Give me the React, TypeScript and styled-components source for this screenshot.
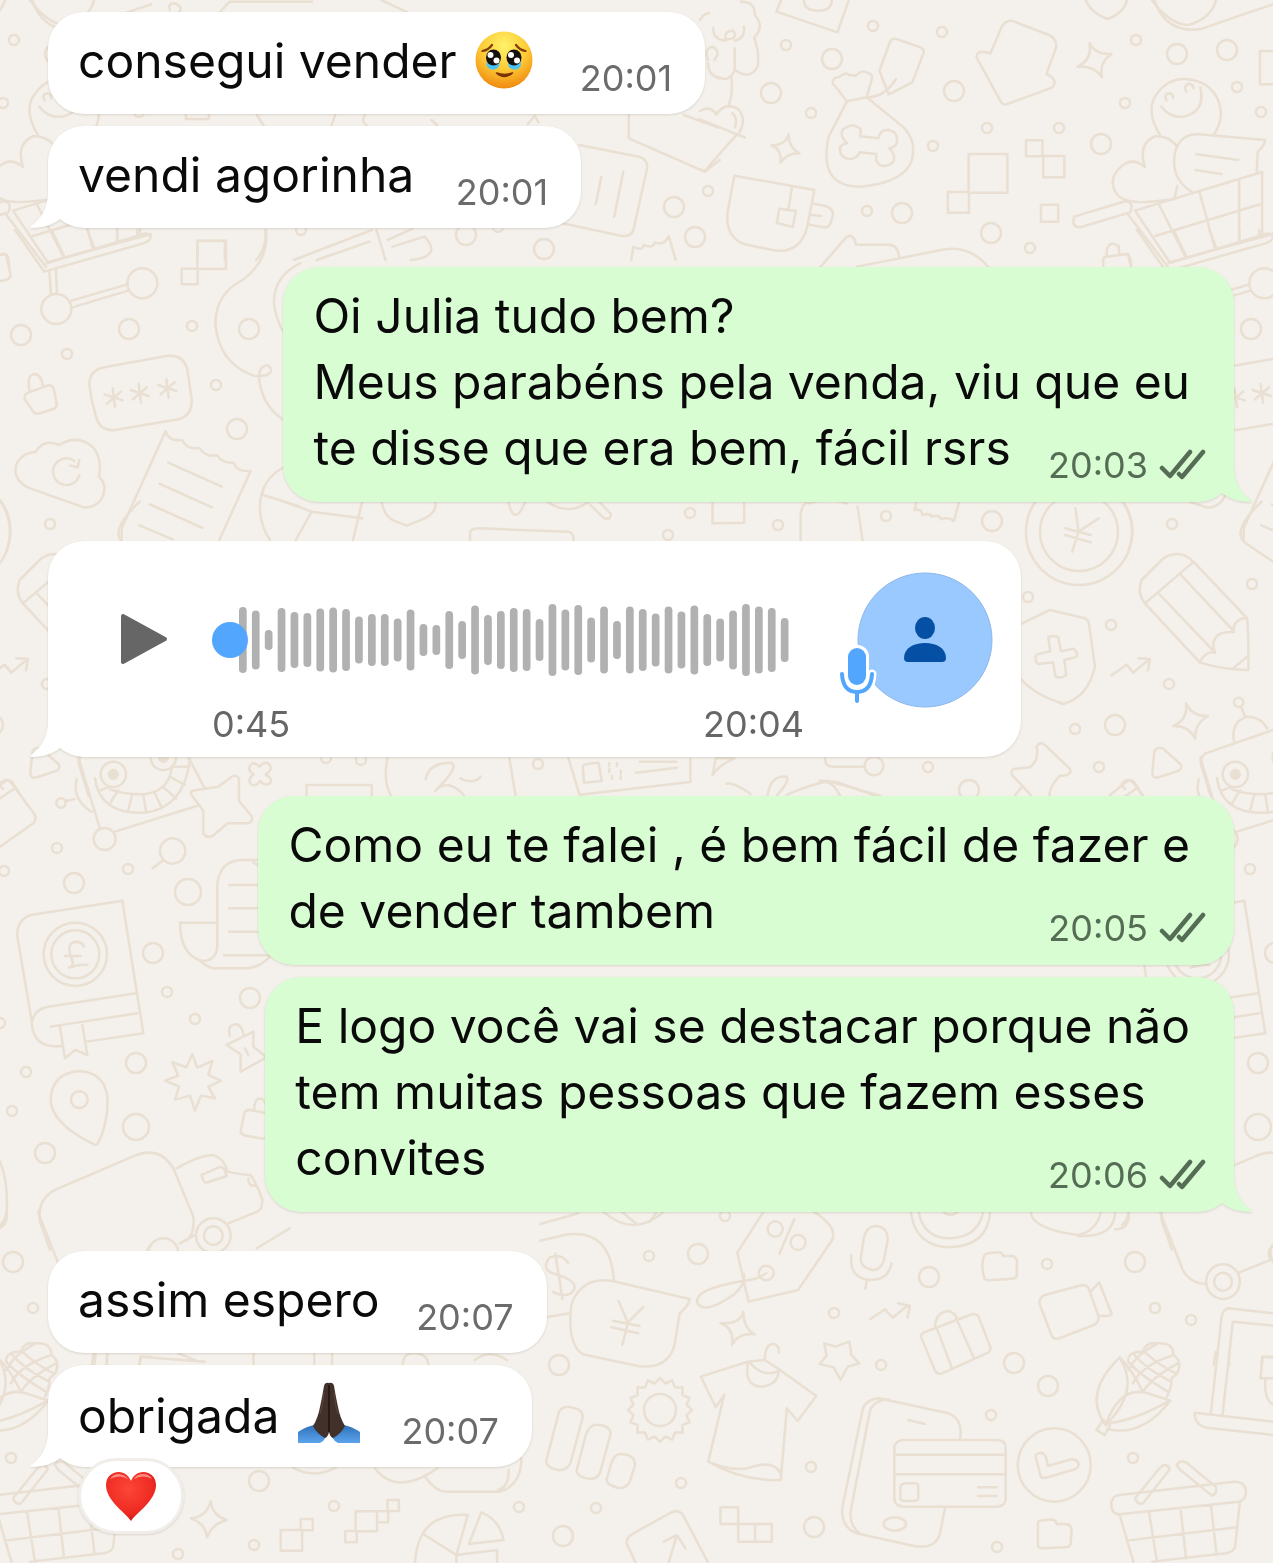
import React from 'react';
import styled, { createGlobalStyle, css } from 'styled-components';

type Side = 'in' | 'out';

const TILE_WIDTH = 1122;

const WAVE = [
  66, 59, 20, 64, 56, 54, 63, 65, 62, 47, 52, 52, 43, 61, 32, 30, 58, 38, 69, 50, 58, 64, 62, 42, 72, 61,
  70, 45, 67, 38, 67, 62, 53, 67, 57, 69, 52, 43, 59, 72, 67, 64, 44,
];

const DOTS_SMALL = [
  [786, 45], [873, 26], [942, 32], [811, 113], [933, 146], [987, 128], [1059, 128], [708, 191], [867, 211],
  [1030, 248], [1136, 40], [1125, 103], [1237, 87], [1261, 112], [67, 354], [192, 326], [216, 385],
  [301, 230], [498, 227], [690, 513], [668, 535], [778, 525], [886, 516], [1172, 524], [1252, 584],
  [1028, 597], [1111, 625], [1169, 684], [1075, 729], [1099, 767], [928, 767], [538, 764], [326, 758],
  [361, 760], [57, 848], [128, 869], [4, 871], [167, 992], [195, 1019], [26, 1072], [12, 1111], [0, 1023],
  [725, 1216], [649, 1256], [834, 1313], [881, 1365], [811, 1467], [681, 1483], [596, 1508], [1047, 1264],
  [1155, 1308], [1191, 1320], [991, 1415], [1133, 1458], [997, 1547], [334, 1506], [519, 1507],
  [254, 1545], [178, 1554],
];

const DOTS_MEDIUM = [
  [832, 59], [771, 93], [954, 91], [902, 213], [991, 233], [1101, 144], [1177, 54], [1227, 50], [21, 335],
  [129, 329], [249, 329], [237, 429], [466, 235], [544, 249], [674, 207], [695, 237], [992, 521],
  [1115, 725], [969, 790], [74, 883], [153, 953], [250, 998], [136, 1063], [45, 1153], [698, 1254],
  [929, 1277], [1135, 1262], [559, 1365], [1014, 1363], [1048, 1386], [563, 1536], [814, 1527], [259, 1481],
];

const DOTS_LARGE = [
  [188, 892], [136, 1127],
];

// wavy outline of the cog doodles
const cogPath = (cx: number, cy: number, r: number, teeth: number) => {
  const points = Array.from({ length: teeth * 2 }, (_, i) => {
    const a = (i * Math.PI) / teeth;
    const d = i % 2 ? r - 3 : r + 2;
    return `${(cx + Math.cos(a) * d).toFixed(1)} ${(cy + Math.sin(a) * d).toFixed(1)}`;
  });
  return `M${points.join('L')}Z`;
};

const Dots = ({ list, r }: { list: number[][]; r: number }) => (
  <>
    {list.map(([cx, cy]) => (
      <circle key={`${cx}_${cy}`} cx={cx} cy={cy} r={r} />
    ))}
  </>
);

const Doodles = () => (
  <Wallpaper viewBox="0 0 1273 1563" preserveAspectRatio="xMidYMin slice" aria-hidden="true">
    <defs>
      <g id="doodles">
        <Dots list={DOTS_SMALL} r={5} />
        <Dots list={DOTS_MEDIUM} r={10} />
        <Dots list={DOTS_LARGE} r={13} />
        <path d={cogPath(660, 1410, 30, 16)} />
        <circle cx="660" cy="1410" r="16" />
        <circle cx="1079" cy="532" r="53" />
        <circle cx="1079" cy="532" r="39" />

        {/* envelope, notes and receipts at the top left */}
        <g transform="scale(.459 .3333)">
          <path d="M65 0q40 75 80 75q50-20 60-75M370 30q-5-20 10-20q20 8 10 28M480 35l20-30h180M830 0l55 35M405 345v12h50v-12M560 345l15 33M730 345l-8 33M795 345q-10 20 5 33M940 360l12 15M1150 372l15-25l8 20" />
          <path d="M1370 345v70L1535 515L1568 480M1490 345l75 38M1262 435l130 35q20 10 18 35L1380 690q-5 20-25 18L1225 670M1310 530l-12 82M1358 515l-20 135" />
          <path d="M578 690q5 50-20 90M430 780v-57h60v57M640 780l170-90M690 780l115-55M820 690l20 90M845 720l55-35M855 740l70-30q40 60-30 70M1375 780l5-40q20 15 22-5q20 12 25-8q20 12 30-18l15 70" />
        </g>

        {/* gift bag, cup, mitten, cart */}
        <g transform="translate(700 0) scale(.3655 .3333)">
          <path d="M112 5q40 0 38 40q28 35-2 68q15 40 10 85q-20 45-62 12M0 60q10-20 25-20M36 85q0 35 35 37q-8-30 20-30q14 25-15 25M120 80q5 35-25 42M95 145v65q-15 40-48 20M86 232q5 45-7 85M22 180q-12-35 12-40q25 15 5 40M22 190q0 35 30 45" />
          <path d="M0 333q28-18 45 10q25-40 60-15q25 30 0 75M0 358l123 55M88 340q15 10 8 42M100 404L12 514L0 508M222 0L209 35L376 97L407 0M285 0q-2 32 40 32q35 0 36-32" />
          <path d="M516 283L491 213L520 125q5-12 18-8l67 26q10 6 6 18L581 247ZM456 292q50 0 80-55M402 304L363 250q-2-18 20-20q15-16 25-4q12-2 18 2q15-20 32-10q12 2 13 15L456 292ZM402 304L352 410q-30 150 86 150q150-15 145-115q0-30-25-62L456 292" />
          <path d="M438 409L488 415q5-28 28-25q28 5 22 40q-5 12-20 15q20 20 10 42q-30 25-46-5v-20l-46-5q-5 20-30 20q-28-8-22-38q5-5 18-10q-20-18-12-40q30-25 50 0Z" />
          <path d="M94 527L75 640q-5 70 45 92q60 15 90 20q65 5 83-70L313 570ZM252 560L242 628M217 626l45 7l-8 48l-44-12ZM306 610l38 8q20 8 20 25l-6 25q-8 18-20 14l-38-8M302 644l30 4" />
          <path d="M853 62q-20 0-28 20L795 160l-20-5q-20 0-18 18l65 130q5 12 16 10L965 262q15-25-17-40L975 140q0-25-20-35ZM1066 130q15 35 60 32q-35 25-26 70q-20-35-67-32q40-20 33-70ZM242 403q0 40 30 57q-35 0-52 28q5-40-25-52q40 0 47-33Z" />
          <path d="M735 462h106v116h-106ZM678 576h58v62h-58ZM892 421h45v48h-45ZM939 468h58v64h-58ZM933 614h47v51h-47ZM1568 153h-36v100h36M1055 0q15 40 60 57q45-17 53-57M1243 0q30 100 125 88q130-50 200-75" />
          <path d="M1258 405q-40-75-10-120q30-50 80-48q70 5 92 70q15 50-15 98M1262 320q25 35 62 30q60-15 45-88M1276 302q-8-22 10-22q10 4 8 14M1330 275q-8-22 10-24q10 4 10 14M1217 500q-20-70 30-92q35 0 60 32M1217 500q-35-30-65 0q-40 40-10 85q25 30 110 18l45-5q5-20 9-40" />
          <path d="M1345 575q-60-40-45-120q15-55 65-52L1546 420q0 15-20 35l-3 65M1358 463l115 17M1356 510l70 12M1190 632L1538 516V700M1190 632l95 155l283-85M1170 642l110 158M1024 650L1165 603q20 5 15 25q0 8-5 10L1040 682q-25 0-16-32ZM1255 612l73 158M1367 577l41 165M1475 540v180M1245 708l288-95" />
          <path d="M1103 800v-20q0-10 10-10l55-8q10 0 12 38M1113 768v-20q10-28 32-10l2 22M330 800L400 712q20-15 27 22h90q25 0 28 40M430 800L670 748q70-10 118 52" />
        </g>

        {/* cart wheels, password card, cloud, receipt */}
        <g transform="translate(0 230) scale(.3333)">
          <path d="M45 0L133 125L430 40q25-8 22-22q-8-12-25-5L140 100M155 0l37 78M262 0l20 52M352 0v35M412 0v15M148 125l5 68M168 120l3 70M215 212L382 163M217 232L385 182M592 32h86v85h-86ZM545 116h48v47h-48Z" />
          <circle cx="169" cy="237" r="45" />
          <circle cx="427" cy="160" r="45" />
          <path d="M798 0q10 90-70 150q-80 40-82 130q10 120 115 157q50 5 53-17q-5-20-25-10q-15 10-10 50q15 80 85 118M900 100q-80 40-78 120q10 70 42 102M75 510q-5-20 15-24l55-20q12-2 16 10l9 45q2 12-10 16l-45 14q-12 2-16-8ZM88 480q-8-45 15-48q20 0 26 35" />
          <path d="M275 510L268 465q0-45 45-53L500 378q50-5 62 40l13 90q2 50-40 60L345 600q-45 4-57-40ZM338 475l7 56M314 493l54 18M363 485l-42 36M416 462l7 56M392 480l54 18M441 472l-42 36M499 447l7 56M475 465l54 18M524 457l-42 36" />
          <path d="M82 772q-50-30-30-75q20-30 55-32q25-40 70-20q60-35 105 10q25 35 15 85q30 30 5 70q-20 25-50 22ZM238 735a40 40 0 1 1-15-42M238 690l-5 22l-22-5" />
          <path d="M365 930v-35L497 603q5 30 50 28q15 30 50 22q20 30 55 23q15 25 50 22q5 28 50 25L658 930M505 698l160 72M478 761l158 71M450 823l157 71M418 886l100 42M865 705q-90 40-85 140q5 50 30 85M790 795l110 35M0 810q50 70 20 150M0 75q20-10 22 15l10 45q0 15-32 18" />
        </g>

        {/* strips above and below the voice message */}
        <g transform="translate(280 480) scale(.6333 .3333)">
          <path d="M160 62q5 50 20 60l20 15l20-15q30-20 25-60M420 62q35 50 70 0M490 75l22 40q12 5 10-15l-20-38M360 62q10 85 28 0M300 182v-22q0-15 15-15L455 155q10 5 8 28M683 70v60l50-2V65M822 182V110q0-30 10-45M920 182L912 80M835 70q30-20 60 0M1005 65l-3 25q12-5 12 15q12-8 15 5q12-8 15 8q12-8 20 5l8-55" />
          <path d="M1256 85l5 70l32-40M1261 155l-10 60M1240 145l40 20M1240 165l40 22M1550 65q-50 90-25 125l43 55M0 60l50 35l80 20M50 95L25 180M130 62l-15 120" />
          <path d="M170 832q-8 70 5 115M362 832l10 115M230 898q5-50 40-50q15 10-25 85q20-40 45 12M285 895q20 20 32-5M42 947v-32h103v32M455 832l18 112l175-38v-70M478 860q0-10 25-12l5 55l-28 5ZM562 878l65-15M568 845h58M683 885l5-50h30q-25 20-35 50M705 912q10-8 38 30M770 945q5-60 30-55q5 15-15 55M800 945q60-50 80-38l60 40" />
          <path d="M520 850v8M532 850v8M520 868v8M538 872v8M524 888v8M538 888v8" />
        </g>

        {/* pencil, shield, pin */}
        <g transform="translate(820 550) scale(.3333)">
          <path d="M975 160q-25-30-10-70L1030 25q50-30 90 10L1282 205q5 90 3 155q-70 0-145-22ZM975 160L1118 38M1018 132L1185 308M1080 72L1243 245M1140 335q20-35 45-27q-5-20-5-20q0-45 60-42q0-40 40-42M1240 355l45-38" />
          <path d="M603 222L690 180l105 25q10 5 12 15l18 130q-20 90-95 112q-90-30-127-75M685 262q12-8 30 0l8 42l38-8q12 10 10 24l-38 10l6 45q-15 12-32 5l-8-43l-45 5q-12-12-5-28l42-10ZM875 376l45-32l20 24l48-40M955 325l35 2l-6 34M1098 460q20 40 66 38q-42 25-38 68q-20-40-66-38q45-20 38-68Z" />
          <path d="M1003 605q10-18 28-8l50 45q8 12-4 20l-60 20q-20 5-20-12ZM650 590q10-18 25-5l75 72q8 20-30 20q-30 30-32 60M650 590q8 40-20 62l-50 5q-12 10 0 22l52 56M585 737l20-25M870 735L920 695q12-8 22 0l25 40M905 705l10 12" />
          <path d="M1172 737L1142 640q0-20 15-30L1359 540M1242 575q-10-60 40-75q40 0 60 35M1275 500l-12-30M15 622q0 28 22 28h98M0 692q40 0 60 45M20 692l160 45" />
          <circle cx="1256" cy="457" r="14" />
          <circle cx="162" cy="648" r="28" />
        </g>

        {/* robot, book, map pin, truck */}
        <g transform="translate(0 750) scale(.3333)">
          <path d="M235 22L300 237M345 245L590 168M565 22l48 90M230 88q-15 60 45 98M222 148l-25 5M285 85q15 110 150 103q120-15 135-165M330 118q40 15 95 15q80-5 90-78M300 122l28-12M330 160l25-40M385 180l12-48M438 185l-8-52M485 172l-22-45M528 145l-40-35M555 105l-45-25M568 50h-45" />
          <circle cx="314" cy="267" r="33" />
          <circle cx="340" cy="73" r="38" />
          <circle cx="490" cy="22" r="38" />
          <circle cx="183" cy="159" r="14" />
          <circle cx="340" cy="73" r="13" fill="#e9dfd2" />
          <circle cx="490" cy="22" r="13" fill="#e9dfd2" />
          <path d="M0 100q20-20 35 0L105 195q5 15-5 25L0 290M0 145l45-30M575 135q-8-12 10-14L655 110l40-30q18-8 22 8v65l38 45q5 15-10 22h-62l-45 38q-20 8-28-8v-68Z" />
          <path d="M752 45q10-12 27 5q15-20 30-5q10 15-12 28q25 15 12 28q-15 8-28-8q-15 20-30 8q-8-15 10-28q-20-12-9-28ZM490 330l-32 25M540 518h110M540 518q0 95 65 115q45 0 47-45V400q10-70 75-70h65M760 338q25 10 32 32M688 405h102M688 475h102M688 545h102M672 616h138M600 633q30 25 50 22h80q60 0 90-50" />
          <circle cx="518" cy="303" r="38" />
          <path d="M95 812L52 560q-3-50 40-65L367 452L430 850L260 875M185 888q-85 10-90-70q8-42 50-48L408 730M152 830L412 790M180 832l15 93l30-25l37 15l-15-90M252 590q-10-20-35-12q-15 10-5 40q15 30-5 35q30-10 55-8M195 618h48" />
          <circle cx="226" cy="613" r="95" />
          <circle cx="226" cy="613" r="72" />
          <path d="M285 1185Q150 1120 152 1045q5-75 85-82q80 5 86 85q0 80-30 133q-3 5-8 4ZM577 913l15 40l45-20l-12 42l38 17l-38 18l20 35l-42-8l-18 45l-15-45l-45 12l12-40l-42-17l40-15l-18-40l42 15Z" />
          <circle cx="238" cy="1049" r="25" />
          <path d="M680 885L760 845v45l40 32L722 965v-52ZM690 858q-10-35 20-35q15 5 20 28M735 895l10 20M733 1090q5-12 18-10l50 10q8 5 6 15l-8 55q-5 8-15 6l-52-10q-10-5-10-12ZM763 1082q-2-38 20-36q18 5 15 40" />
          <path d="M150 1500L120 1415q-10-65 45-95L410 1215q70-25 110 40L580 1400q5 50-20 72M530 1255q70-40 110-40q35 12 42 50q50 10 70 10q25 40 35 75q0 30-15 35L685 1420M605 1275l50-22q12-5 18 5l8 20l-55 18q-12 5-16-5ZM745 1285q0 25 20 22M540 1480l45-25M770 1495l100-60M0 1235q25 60 20 150q-5 30-20 40" />
          <circle cx="640" cy="1457" r="52" />
          <circle cx="640" cy="1457" r="28" />
          <circle cx="490" cy="1510" r="45" />
        </g>

        {/* shirt, phone, corn, basket */}
        <g transform="translate(540 1190) scale(.4675 .3333)">
          <path d="M0 152L60 133q90-15 98 136M0 385L64 370M0 102L82 70M60 218q-15-30-40-15q-20 40 15 50q45 20 38 45q-10 30-45 8M33 192l15 135M320 327L155 273q-65-15-88 70q-10 120 25 150l120 36q60 8 75-60l12-100q18-20 21-40ZM168 333l20 65l33-47M188 398l-12 67M156 392l57 16M153 412l57 18" />
          <path d="M135 65q65 80 130 0M175 65l30 35M250 65l-15 30M478 65L422 188l24 147L552 300L625 150q12-40-40-85M544 88l-32 103M484 250q-20 20-48 22q-105 25-100 65q15 40 80-25q25-30 20-60M435 365q0 50 24 68q-35-5-48 32q5-50-25-66q42 5 49-34Z" />
          <ellipse cx="503" cy="117" rx="16" ry="23" />
          <ellipse cx="552" cy="157" rx="16" ry="23" />
          <ellipse cx="484" cy="249" rx="16" ry="22" />
          <path d="M692 150q5-42 27-42q28 5 24 48l-8 58q-8 28-25 26q-25-8-24-35ZM666 195q-5 70 40 75q40 0 46-50M699 270l-3 26M793 65q10 107 85 107q80-5 85-107M810 65q10 80 68 80q60-5 70-80M862 65q15 20 32 0M950 198q2-10 20-10q20-5 20 10h20q12 5 10 20v40q-2 8-10 8l-50 5q-10 0-10-10q-8-40 0-63ZM706 388l32-30l16 25l34-38M766 340l25 8l-5 35" />
          <path d="M815 440q0-10 10-15l95-50q12-8 18 5l25 90q2 15-8 20L860 550q-10 5-15-8ZM845 415q0-50 30-52q15 10 18 25M848 412l33 122M890 385l38 118M1068 340q0-18 12-25l80-30q12 0 15 15l20 80q0 18-10 25l-75 40q-12 5-16-10ZM1178 305l18-28l27 95q-5 8-25 5M1326 65L1375 240q15 40 50 42M1495 248l70-40M1568 165q-15 20-5 45M1050 65q0 50 100 70q40-10 50-70M1150 138q80 5 80-73M1230 118q30 0 30-50" />
          <ellipse cx="1461" cy="275" rx="36" ry="52" />
          <ellipse cx="1461" cy="275" rx="19" ry="27" />
          <path d="M445 515L344 560l32 92l18-38L360 815q75 60 155 55L528 655l23 38l40-75L511 538L481 510ZM445 515q-10 75 30 75q35-5 36-52M450 520q30 45 62 22M481 510q0-50 20-48q12 8 10 25M360 815q60 35 95 15q45-20 60 20M608 460l24 10l30-15l4 40l17 25l-25 10l-15 40l-15-38l-30-10l15-25Z" />
          <path d="M60 650l18 6q15 8 13 28L65 820q-8 22-25 20q-25-5-27-25L40 668q5-18 20-18ZM120 704q30 0 31 28L128 850q-8 20-25 16q-22-5-25-22l20-110q8-30 22-30ZM170 792q35 0 33 35l-10 45q-8 25-25 22q-25-8-26-25l12-55q6-20 16-22Z" />
          <path d="M867 950L855 1033q-10 45-55 35L677 1030q-35-20-30-80L690 660q5-30 35-35L874 670q30 15 25 75M745 628q-35 5-40 40L665 960q-5 45 20 72M788 690l35 12M758 770q2-18 20-20h200q18 2 18 20v160q-2 18-18 20H778q-18-2-20-20ZM758 794h238M758 853h238M937 892h40M937 918h40M783 880h18q8 0 8 10v35q-2 8-10 8h-18q-10 0-10-10v-32q2-10 12-11Z" />
          <ellipse cx="759" cy="1002" rx="24" ry="20" />
          <ellipse cx="1100" cy="825" rx="78" ry="110" />
          <path d="M1060 800q0-10 12-12q12 2 14 40l50-20q15 0 16 15q0 12-10 16L1080 864q-8 2-10-10ZM1210 705Q1160 610 1240 502q45 100-30 203M1210 705q30-120 90-95l48 22q-60 110-135 85M1240 502q28 40 50 105M1215 700q60-10 132-68M1205 690l15 15l-12 30l-18-15Z" />
          <path d="M1258 512q0-28 32-27q5-30 32-25q32-5 33 35q20 20 8 55l-12 15q0 30-10 55M1258 515q25 40 85 90M1268 490q30 50 82 85M1292 484q30 40 68 66M1268 580q20-55 87-85M1290 605q20-45 75-85M1258 540q20-50 62-78" />
          <path d="M1435 670L1458 380q3-22 15-25L1568 370M1460 675L1482 395L1568 407M1400 668L1568 695M1400 668q0 35 25 45L1568 735M1568 500h-22l-5 65h27M1552 565q-5 60 16 80M386 952h38v50h-38ZM424 1002h72v53h-72ZM460 1002v53M205 1119l-20-59q0-20 15-30L280 968q15-10 25 5L360 1119M293 1035l-18 84M265 1055l28-20l18 40" />
          <path d="M1225 930q0-12 15-15L1485 875q25 0 25 30q0 25-15 30L1240 973q-20 0-18-40ZM1273 925L1325 835q12-20 22 0q0 5-5 12L1290 940q-12 5-17-15ZM1362 825q5-15 20-8L1445 890q5 20-8 27L1370 840ZM1240 975l30 144M1497 935l-10 135q-2 15-20 20L1310 1115M1303 968l17 150M1370 955l12 150M1435 945l12 145M1255 1052L1490 1012M1065 998q2-8 15-8q25-5 25 12h20q12 2 12 20l-2 40q-2 10-12 10l-48 3q-10 0-10-12Z" />
        </g>

        {/* sparkle, squares and pie chart at the bottom */}
        <g transform="translate(0 1340) scale(.3571 .3333)">
          <path d="M590 483q5 45 45 57q-40 10-55 52q-5-42-45-57q45-5 55-52ZM786 570h60v62h-60ZM842 537h34v34h-34ZM996 514h60v60h-60ZM967 573h32v34h-32ZM1056 514h31v33h-31ZM1085 480h32v33h-32ZM1310 525q-140-10-148 144M1310 525L1278 645L1185 582M1278 645L1392 630v38M1278 645v24M1348 517L1313 612L1410 600q-10-60-62-83Z" />
          <path d="M262 37l-5 38M300 37v38M390 75l3-25l180 15M500 40l50 22M710 37v38M880 37v38M930 37v38M1128 75q0-37 35-37q35 5 37 37M1330 60q40-35 90 0M820 383q60 35 120 0M1050 385q60 85 175 0M1190 410q30 45 60 45h150q60-20 60-100M1395 450q30-10 30-60" />
        </g>
      </g>
    </defs>
    <use href="#doodles" />
    <use href="#doodles" x={-TILE_WIDTH} />
    <use href="#doodles" x={TILE_WIDTH} />
  </Wallpaper>
);

const TearyFace = () => (
  <Emoji viewBox="0 0 60 60" role="img" aria-label="🥹">
    <defs>
      <radialGradient id="face" cx="50%" cy="25%" r="75%">
        <stop offset="0" stopColor="#fff36a" />
        <stop offset=".55" stopColor="#fdca36" />
        <stop offset="1" stopColor="#f0890f" />
      </radialGradient>
    </defs>
    <circle cx="30" cy="30" r="28.500" fill="url(#face)" />
    <ellipse cx="19" cy="34" rx="6.500" ry="5.500" fill="#4bc4f5" />
    <ellipse cx="40.500" cy="34" rx="6.500" ry="5.500" fill="#4bc4f5" />
    <ellipse cx="19.500" cy="27.500" rx="7.500" ry="8" fill="#15100c" />
    <ellipse cx="40" cy="27.500" rx="7.500" ry="8" fill="#15100c" />
    <circle cx="16.500" cy="25" r="3" fill="#fff" />
    <circle cx="22.500" cy="30.500" r="3" fill="#fff" />
    <circle cx="37" cy="25" r="3" fill="#fff" />
    <circle cx="43" cy="30.500" r="3" fill="#fff" />
    <path d="M8.500 21q6-1 9.500-6M51.500 21q-6-1-9.500-6" fill="none" stroke="#834008" strokeWidth="2.200" strokeLinecap="round" />
    <path d="M22.500 43q7.500 7 16 0q-8 3-16 0Z" fill="#7a3306" stroke="#7a3306" strokeWidth="1.600" strokeLinejoin="round" />
  </Emoji>
);

const PrayingHands = () => (
  <Emoji viewBox="0 0 64 64" role="img" aria-label="🙏🏿" $wide>
    <defs>
      <linearGradient id="sleeve" x1="0" y1="0" x2="0" y2="1">
        <stop offset="0" stopColor="#2f70b8" />
        <stop offset="1" stopColor="#5ba4ee" />
      </linearGradient>
    </defs>
    <path d="M1 51Q8 46 17 44L29 56Q27 60 23 62H1ZM63 51Q56 46 47 44L35 56Q37 60 41 62H63Z" fill="url(#sleeve)" />
    <path d="M32 2q-4-1-5 3q-2 12-4 21q-2 11-7 19q4 8 12 12q3-1 4-6q1 5 4 6q8-4 12-12q-5-8-7-19q-2-9-4-21q-1-4-5-3Z" fill="#42312b" />
    <path d="M32 4v47" stroke="#1e1310" strokeWidth="1.500" />
    <path d="M27 11q-1 14-4 22M37 11q1 14 4 22" stroke="#5b463d" strokeWidth="1" fill="none" />
  </Emoji>
);

const RedHeart = () => (
  <svg width="52" height="52" viewBox="0 0 52 52" role="img" aria-label="❤️">
    <defs>
      <radialGradient id="heart" cx="45%" cy="35%" r="70%">
        <stop offset="0" stopColor="#fc4636" />
        <stop offset=".7" stopColor="#ee2a22" />
        <stop offset="1" stopColor="#c3130f" />
      </radialGradient>
    </defs>
    <path d="M26 51C21 43 1 31 1 15C1 7 7 2 13.500 2C20 2 24 6 26 11C28 6 32 2 38.500 2C45 2 51 7 51 15C51 31 31 43 26 51Z" fill="url(#heart)" />
    <path d="M5 9q3-5 9-5q6 1 9 5q-8-5-18 0ZM29 9q3-5 9-5q6 0 9 5q-9-5-18 0Z" fill="#ffb4a8" opacity=".7" />
  </svg>
);

const Ticks = () => (
  <TickIcon viewBox="0 0 48 34" role="img" aria-label="Entregue">
    <path d="M4 20L12 28L32 4M21 26L24 29L45 4" fill="none" stroke="currentColor" strokeWidth="4.500" strokeLinecap="round" strokeLinejoin="round" />
  </TickIcon>
);

const BubbleTail = ({ side }: { side: Side }) => (
  <TailShape viewBox="0 0 58 37" $side={side} aria-hidden="true">
    <path d="M18 0C18 16 11 27 1 34Q-1 36 2 36C14 36 24 32 30 27L54 36V0Z" fill="currentColor" />
  </TailShape>
);

interface BubbleProps {
  side: Side;
  lines: React.ReactNode[];
  time: string;
  tail?: boolean;
  reaction?: React.ReactNode;
}

const TextMessage = ({ side, lines, time, tail, reaction }: BubbleProps) => (
  <Bubble $side={side}>
    {tail && <BubbleTail side={side} />}
    <TextLayout $side={side}>
      <MessageText $side={side}>
        {lines.map((line, i) => (
          <Line key={i}>
            {line}
            {i === lines.length - 1 && <MetaSpace $side={side} />}
          </Line>
        ))}
      </MessageText>
      <Meta $side={side}>
        <time>{time}</time>
        {side === 'out' && <Ticks />}
      </Meta>
    </TextLayout>
    {reaction}
  </Bubble>
);

const VoiceMessage = () => (
  <Bubble $side="in">
    <BubbleTail side="in" />
    <VoiceLayout>
      <PlayButton type="button" aria-label="Reproduzir">
        <svg width="48" height="52" viewBox="0 0 48 52">
          <path d="M3 3L45 26L3 49Z" fill="#666" stroke="#666" strokeWidth="4" strokeLinejoin="round" />
        </svg>
      </PlayButton>
      <Player>
        <WaveBox>
          <Wave viewBox="0 0 550 76" aria-hidden="true">
            {WAVE.map((h, i) => (
              <rect key={i} x={i * 12.9} y={38 - h / 2} width="7.7" height={h} rx="3.8" fill="#b1b1b1" />
            ))}
          </Wave>
          <Seek type="range" min="0" max="45" defaultValue="0" aria-label="Posição do áudio" />
        </WaveBox>
        <Times>
          <span>0:45</span>
          <time>20:04</time>
        </Times>
      </Player>
      <Avatar viewBox="0 0 156 136" role="img" aria-label="Foto do contato">
        <circle cx="88" cy="68" r="67" fill="#99c9fe" stroke="#8bb8ea" strokeWidth="1" />
        <ellipse cx="88" cy="56" rx="10" ry="11" fill="#0550a4" />
        <path d="M67 86C67 76 77 71 88 71S109 76 109 86Q109 90 105 90H71Q67 90 67 86Z" fill="#0550a4" />
        <g fill="none" stroke="#fff" strokeWidth="9" strokeLinecap="round">
          <path d="M5 102q1 18 15 18q14 0 15-18M20 120v9" />
          <rect x="11" y="76" width="18" height="37" rx="9" strokeWidth="6" />
        </g>
        <path d="M5 102q1 18 15 18q14 0 15-18M20 120v9" fill="none" stroke="#53a6fd" strokeWidth="4" strokeLinecap="round" />
        <rect x="11" y="76" width="18" height="37" rx="9" fill="#53a6fd" stroke="#fff" strokeWidth="6" paintOrder="stroke" />
      </Avatar>
    </VoiceLayout>
  </Bubble>
);

const App = () => (
  <>
    <GlobalStyle />
    <Page>
      <Doodles />
      <Thread>
        <Group>
          <TextMessage side="in" lines={[<>consegui vender <TearyFace /></>]} time="20:01" />
          <TextMessage side="in" lines={['vendi agorinha']} time="20:01" tail />
        </Group>
        <Group>
          <TextMessage
            side="out"
            lines={['Oi Julia tudo bem?', 'Meus parabéns pela venda, viu que eu', 'te disse que era bem, fácil rsrs']}
            time="20:03"
            tail
          />
        </Group>
        <Group>
          <VoiceMessage />
        </Group>
        <Group>
          <TextMessage side="out" lines={['Como eu te falei , é bem fácil de fazer e', 'de vender tambem']} time="20:05" />
          <TextMessage
            side="out"
            lines={['E logo você vai se destacar porque não', 'tem muitas pessoas que fazem esses', 'convites']}
            time="20:06"
            tail
          />
        </Group>
        <Group>
          <TextMessage side="in" lines={['assim espero']} time="20:07" />
          <TextMessage
            side="in"
            lines={[<>obrigada <PrayingHands /></>]}
            time="20:07"
            tail
            reaction={
              <Reaction type="button">
                <RedHeart />
              </Reaction>
            }
          />
        </Group>
      </Thread>
    </Page>
  </>
);

export default App;

const GlobalStyle = createGlobalStyle`
  * {
    box-sizing: border-box;
  }
  body {
    margin: 0;
    background: #f4f0eb;
    font-family: Inter, 'Liberation Sans', sans-serif;
  }
`;

const Page = styled.main`
  position: relative;
  min-height: 100vh;
  overflow: hidden;
`;

const Wallpaper = styled.svg`
  position: absolute;
  inset: 0;
  width: 100%;
  height: 100%;
  fill: none;
  stroke: #e9dfd2;
  stroke-width: 2.5px;
  stroke-linejoin: round;
  stroke-linecap: round;
  path,
  circle,
  ellipse {
    vector-effect: non-scaling-stroke;
  }
`;

const Thread = styled.div`
  position: relative;
  display: flex;
  flex-direction: column;
  gap: 39px;
  padding: 12px 39px 96px 48px;
`;

const Group = styled.section`
  display: flex;
  flex-direction: column;
  gap: 12px;
`;

const Bubble = styled.article<{ $side: Side }>`
  position: relative;
  max-width: 100%;
  border-radius: 36px;
  filter: drop-shadow(0 1px 1px rgba(60, 50, 30, 0.14));
  ${({ $side }) =>
    $side === 'in'
      ? css`
          align-self: flex-start;
          background: #fff;
        `
      : css`
          align-self: flex-end;
          background: #d8fdd2;
        `}
`;

const TailShape = styled.svg<{ $side: Side }>`
  position: absolute;
  bottom: -1px;
  width: 58px;
  height: 37px;
  ${({ $side }) =>
    $side === 'in'
      ? css`
          left: -18px;
          color: #fff;
        `
      : css`
          right: -18px;
          color: #d8fdd2;
          transform: scaleX(-1);
        `}
`;

const TextLayout = styled.div<{ $side: Side }>`
  position: relative;
  display: grid;
  padding: ${({ $side }) => ($side === 'in' ? '16px 33px 18px 30px' : '16px 28px 19px 30px')};
  > * {
    grid-area: 1 / 1;
  }
`;

const MessageText = styled.p<{ $side: Side }>`
  margin: 0;
  padding: ${({ $side }) => ($side === 'in' ? '0 0 2px' : '0 16px 2px 0')};
  color: #0a0a0a;
  font-size: 48px;
  line-height: 66px;
`;

const Line = styled.span`
  display: block;
  height: 66px;
  white-space: nowrap;
`;

const MetaSpace = styled.span<{ $side: Side }>`
  display: inline-block;
  width: ${({ $side }) => ($side === 'in' ? '134px' : '172px')};
`;

const Meta = styled.div<{ $side: Side }>`
  align-self: end;
  justify-self: end;
  display: flex;
  align-items: center;
  gap: 10px;
  height: 36px;
  color: ${({ $side }) => ($side === 'in' ? '#6b6b6b' : '#566d55')};
  font-size: 36px;
  line-height: 36px;
`;

const TickIcon = styled.svg`
  width: 48px;
  height: 34px;
`;

const Emoji = styled.svg<{ $wide?: boolean }>`
  width: ${({ $wide }) => ($wide ? '64px' : '60px')};
  height: ${({ $wide }) => ($wide ? '64px' : '60px')};
  margin: 0 4px;
  vertical-align: -12px;
`;

const VoiceLayout = styled.div`
  position: relative;
  display: flex;
  align-items: flex-start;
  padding: 31px 28px 15px 72px;
`;

const PlayButton = styled.button`
  margin-top: 41px;
  padding: 0;
  border: 0;
  background: none;
  line-height: 0;
  cursor: pointer;
`;

const Player = styled.div`
  width: 592px;
  margin: 30px 33px 0 44px;
`;

const WaveBox = styled.div`
  display: grid;
  align-items: center;
  width: 577px;
  height: 76px;
  > * {
    grid-area: 1 / 1;
  }
`;

const Wave = styled.svg`
  width: 550px;
  height: 76px;
  margin-left: 27px;
`;

const Seek = styled.input`
  width: 100%;
  height: 36px;
  margin: 0;
  appearance: none;
  background: transparent;
  cursor: pointer;
  &::-webkit-slider-thumb {
    appearance: none;
    width: 36px;
    height: 36px;
    border-radius: 50%;
    background: #53a6fd;
  }
`;

const Times = styled.div`
  display: flex;
  justify-content: space-between;
  margin-top: 28px;
  color: #666;
  font-size: 36px;
  line-height: 36px;
`;

const Avatar = styled.svg`
  width: 156px;
  height: 136px;
`;

const Reaction = styled.button`
  position: absolute;
  bottom: -67px;
  left: 30px;
  display: flex;
  align-items: center;
  justify-content: center;
  width: 106px;
  height: 76px;
  padding: 0;
  border: 3px solid #f1eeea;
  border-radius: 38px;
  background: #fff;
  cursor: pointer;
`;
